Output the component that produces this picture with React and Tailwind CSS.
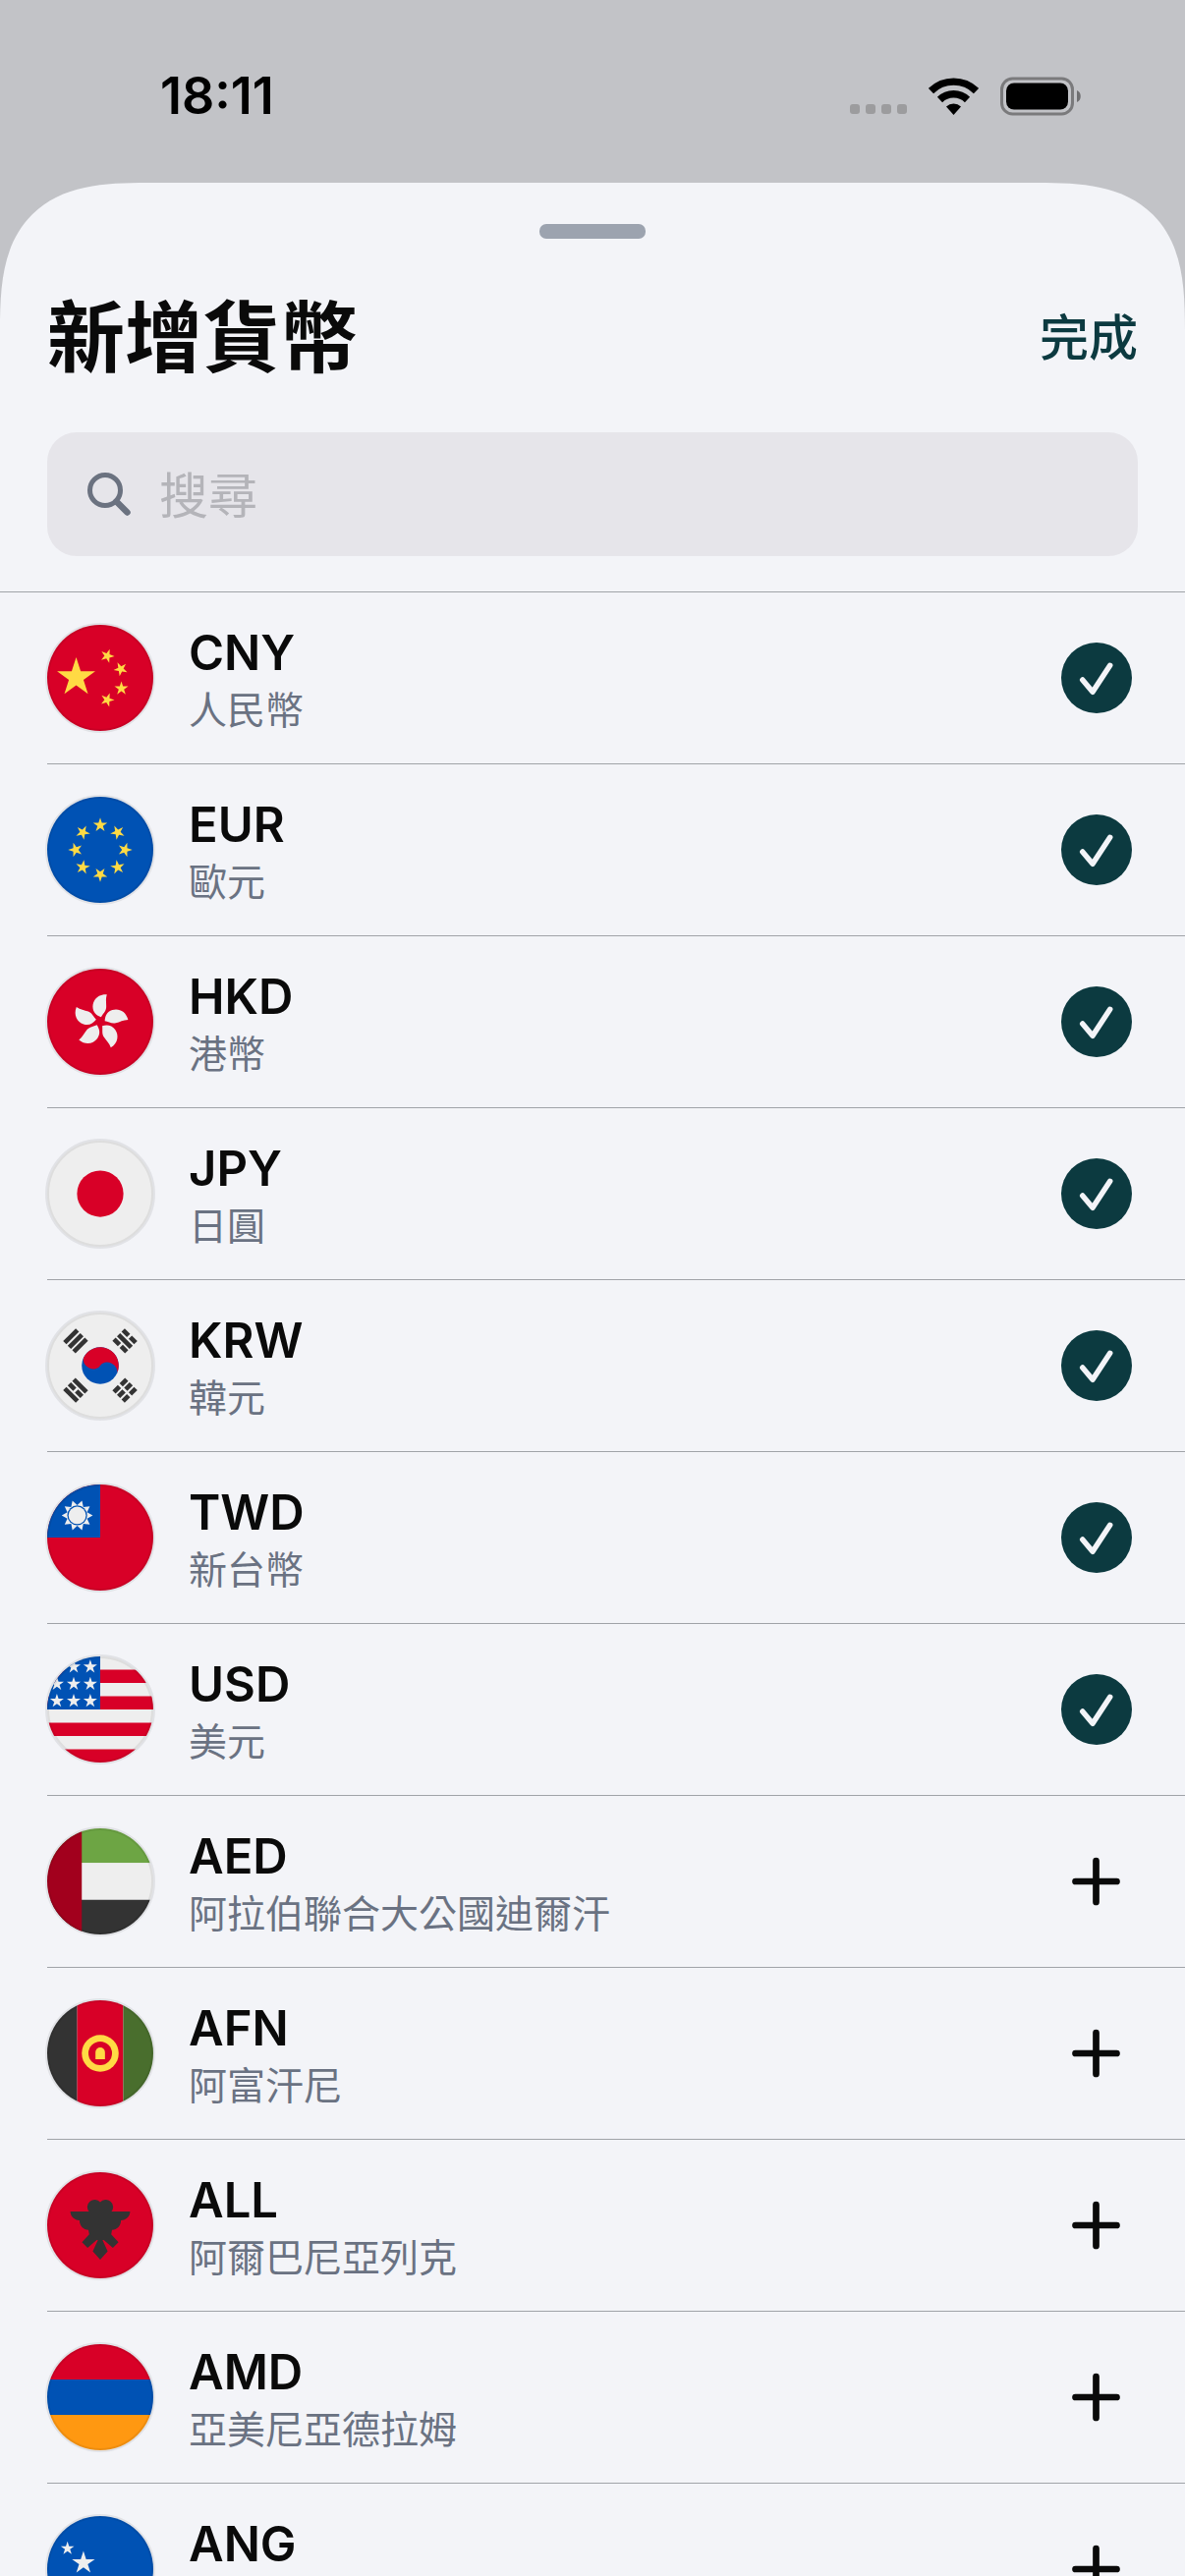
import { useState } from "react";

/* FLAG HELPERS */
function starPoints(cx, cy, r) {
  return Array.from({ length: 10 }, (_, i) => {
    const radius = i % 2 ? r * 0.382 : r;
    const angle = (i * Math.PI) / 5 - Math.PI / 2;
    return `${cx + radius * Math.cos(angle)},${cy + radius * Math.sin(angle)}`;
  }).join(" ");
}

function Star({ cx, cy, r, turn = 0, fill = "#eee" }) {
  return (
    <polygon
      points={starPoints(cx, cy, r)}
      transform={`rotate(${turn} ${cx} ${cy})`}
      fill={fill}
    />
  );
}

/* bars run from the outside in, true = unbroken */
function Trigram({ angle, bars }) {
  return (
    <g transform={`rotate(${angle} 256 256) translate(256 88)`} fill="#333">
      {bars.map((solid, i) => {
        const y = -42 + i * 31;
        return solid ? (
          <rect key={i} x="-43" y={y} width="86" height="22" />
        ) : (
          <g key={i}>
            <rect x="-43" y={y} width="37" height="22" />
            <rect x="6" y={y} width="37" height="22" />
          </g>
        );
      })}
    </g>
  );
}

const sunRays = Array.from({ length: 20 }, (_, i) => {
  const radius = i % 2 ? 50 : 75;
  const angle = (i * Math.PI) / 10;
  return `${145 + radius * Math.cos(angle)},${149 + radius * Math.sin(angle)}`;
}).join(" ");

/* FLAGS */
const flags = {
  CNY: (
    <>
      <path fill="#d80027" d="M0 0h512v512H0z" />
      <Star cx={140} cy={254} r={97} fill="#ffda44" />
      <Star cx={290} cy={150} r={35} turn={20} fill="#ffda44" />
      <Star cx={355} cy={213} r={35} turn={45} fill="#ffda44" />
      <Star cx={358} cy={307} r={35} fill="#ffda44" />
      <Star cx={290} cy={362} r={35} turn={20} fill="#ffda44" />
    </>
  ),
  EUR: (
    <>
      <path fill="#0052b4" d="M0 0h512v512H0z" />
      {[0, 45, 90, 135, 180, 225, 270, 315].map((a) => (
        <g key={a} transform={`rotate(${a} 256 256)`}>
          <Star cx={256} cy={137} r={36} fill="#ffda44" />
        </g>
      ))}
    </>
  ),
  HKD: (
    <>
      <path fill="#d80027" d="M0 0h512v512H0z" />
      {[0, 72, 144, 216, 288].map((a) => (
        <path
          key={a}
          transform={`translate(256 256) rotate(${a})`}
          fill="#eee"
          d="M32-131C-10-134-36-105-36-73C-36-45-18-30 4-22C12-38 28-50 29-70C30-90 25-108 32-131z"
        />
      ))}
    </>
  ),
  JPY: (
    <>
      <path fill="#eee" d="M0 0h512v512H0z" />
      <circle cx="256" cy="256" r="112" fill="#d80027" />
    </>
  ),
  KRW: (
    <>
      <path fill="#eee" d="M0 0h512v512H0z" />
      <circle cx="256" cy="256" r="89" fill="#0052b4" />
      <path
        transform="translate(256 256) rotate(27)"
        fill="#d80027"
        d="M-89 0A89 89 0 0 1 89 0A44 34 0 0 0 0 0A44 34 0 0 1-89 0z"
      />
      <Trigram angle={-45} bars={[true, true, true]} />
      <Trigram angle={45} bars={[false, true, false]} />
      <Trigram angle={-135} bars={[true, false, true]} />
      <Trigram angle={135} bars={[false, false, false]} />
    </>
  ),
  TWD: (
    <>
      <path fill="#d80027" d="M0 0h512v512H0z" />
      <path fill="#0052b4" d="M0 0h256v256H0z" />
      <polygon points={sunRays} fill="#eee" />
      <circle cx="145" cy="149" r="48" fill="#0052b4" />
      <circle cx="145" cy="149" r="42" fill="#eee" />
    </>
  ),
  USD: (
    <>
      <path fill="#eee" d="M0 0h512v512H0z" />
      <path
        fill="#d80027"
        d="M0 64h512v64H0zM0 192h512v64H0zM0 320h512v64H0zM0 448h512v64H0z"
      />
      <path fill="#0052b4" d="M0 0h256v256H0z" />
      {[50, 133, 215].map((y) =>
        [47, 128, 208].map((x) => <Star key={`${x}-${y}`} cx={x} cy={y} r={35} />)
      )}
    </>
  ),
  AED: (
    <>
      <path fill="#6da544" d="M0 0h512v167H0z" />
      <path fill="#eee" d="M0 167h512v178H0z" />
      <path fill="#333" d="M0 345h512v167H0z" />
      <path fill="#a2001d" d="M0 0h167v512H0z" />
    </>
  ),
  AFN: (
    <>
      <path fill="#333" d="M0 0h145v512H0z" />
      <path fill="#d80027" d="M145 0h222v512H145z" />
      <path fill="#496e2d" d="M367 0h145v512H367z" />
      <circle cx="256" cy="256" r="89" fill="#ffda44" />
      <circle cx="256" cy="256" r="57" fill="#d80027" />
      <path fill="#ffda44" d="M233 285v-34a23 23 0 0 1 46 0v34z" />
    </>
  ),
  ALL: (
    <>
      <path fill="#d80027" d="M0 0h512v512H0z" />
      <path
        fill="#333"
        d="M112 190h90a33 33 0 1 1 54-45a33 33 0 1 1 54 45h90c0 23-19 42-44 42c0 26-19 46-43 46l-4 22l35 38l-27 27l-44-38h-6l25 55l-36 40l-36-40l25-55h-6l-44 38l-27-27l35-38l-4-22c-24 0-43-20-43-46c-25 0-44-19-44-42z"
      />
    </>
  ),
  AMD: (
    <>
      <path fill="#d80027" d="M0 0h512v171H0z" />
      <path fill="#0052b4" d="M0 171h512v170H0z" />
      <path fill="#ff9811" d="M0 341h512v171H0z" />
    </>
  ),
  ANG: (
    <>
      <path fill="#0052b4" d="M0 0h512v512H0z" />
      <path fill="#ffda44" d="M0 322h512v67H0z" />
      <Star cx={98} cy={156} r={34} />
      <Star cx={175} cy={226} r={58} />
    </>
  ),
};

const currencies = [
  { code: "CNY", name: "人民幣" },
  { code: "EUR", name: "歐元" },
  { code: "HKD", name: "港幣" },
  { code: "JPY", name: "日圓" },
  { code: "KRW", name: "韓元" },
  { code: "TWD", name: "新台幣" },
  { code: "USD", name: "美元" },
  { code: "AED", name: "阿拉伯聯合大公國迪爾汗" },
  { code: "AFN", name: "阿富汗尼" },
  { code: "ALL", name: "阿爾巴尼亞列克" },
  { code: "AMD", name: "亞美尼亞德拉姆" },
  { code: "ANG", name: "荷屬安地列斯盾" },
];

/* STATUS BAR */
function StatusBar() {
  return (
    <div className="flex h-[186px] shrink-0 items-center justify-between pt-2.5 pr-[106px] pl-[163px]">
      <time className="text-[52px] leading-[60px] font-semibold text-black">
        18:11
      </time>

      <div className="flex items-center">
        <div className="mt-[26px] mr-[22px] flex gap-1.5">
          {[0, 1, 2, 3].map((i) => (
            <span key={i} className="size-2.5 rounded-[3px] bg-[#9c9c9e]" />
          ))}
        </div>
        <svg viewBox="0 0 51 38" className="mr-[22px] h-[38px] w-[51px]" aria-hidden="true">
          <g fill="none" stroke="#000" strokeWidth="7.4">
            <path d="M2.5 13.5a33 33 0 0 1 46 0" />
            <path d="M11.5 22.5a20 20 0 0 1 28 0" />
          </g>
          <path d="M18 29.5a11 11 0 0 1 15 0L25.5 38z" />
        </svg>
        <svg viewBox="0 0 82 40" className="h-10 w-[82px]" aria-hidden="true">
          <rect x="1.5" y="2" width="72" height="36" rx="11" fill="none" stroke="#7a7a7c" strokeWidth="3" />
          <rect x="6" y="6.5" width="63" height="27" rx="8" />
          <path fill="#6f6f71" d="M78 14c5 1.500 5 10.500 0 12z" />
        </svg>
      </div>
    </div>
  );
}

function CheckIcon() {
  return (
    <svg viewBox="0 0 72 72" className="size-[72px]" aria-hidden="true">
      <circle cx="36" cy="36" r="36" fill="#0c3a40" />
      <path
        d="M21.700 38 32 50.300 49.700 23.300"
        fill="none"
        stroke="#f3f4f8"
        strokeWidth="5.500"
        strokeLinecap="round"
        strokeLinejoin="round"
      />
    </svg>
  );
}

function PlusIcon() {
  return (
    <svg viewBox="0 0 72 72" className="size-[72px]" aria-hidden="true">
      <path
        d="M35.500 15v42M14.500 36h42"
        fill="none"
        stroke="#0a0a0a"
        strokeWidth="6.700"
        strokeLinecap="round"
      />
    </svg>
  );
}

/* LIST ROW */
function CurrencyRow({ currency, selected, onToggle }) {
  return (
    <li className="ml-12 flex h-[175px] items-center gap-9 border-b border-[#a0a3a8] pr-[54px]">
      <svg
        viewBox="0 0 512 512"
        className="size-[108px] shrink-0 rounded-full outline-4 -outline-offset-2 outline-black/7"
        aria-hidden="true"
      >
        {flags[currency.code]}
      </svg>

      <div className="min-w-0 flex-1 pt-1">
        <p className="text-[49px] leading-[60px] font-semibold text-[#0a0a0a]">
          {currency.code}
        </p>
        <p className="mt-0.5 text-[39px] leading-[52px] text-gray-500">
          {currency.name}
        </p>
      </div>

      <button
        type="button"
        aria-pressed={selected}
        aria-label={currency.name}
        onClick={onToggle}
        className="shrink-0"
      >
        {selected ? <CheckIcon /> : <PlusIcon />}
      </button>
    </li>
  );
}

export default function App() {
  const [query, setQuery] = useState("");
  const [selected, setSelected] = useState([
    "CNY", "EUR", "HKD", "JPY", "KRW", "TWD", "USD",
  ]);

  const toggle = (code) =>
    setSelected((prev) =>
      prev.includes(code) ? prev.filter((c) => c !== code) : [...prev, code]
    );

  const visible = currencies.filter(
    (c) => c.code.includes(query.toUpperCase()) || c.name.includes(query)
  );

  return (
    <div
      lang="zh-Hant"
      className="flex h-screen flex-col overflow-hidden bg-[#c2c3c7] font-[Inter,'Noto_Sans_CJK_TC',sans-serif]"
    >
      <StatusBar />

      <main className="flex min-h-0 flex-1 flex-col overflow-hidden rounded-t-[114px] bg-[#f3f4f8] supports-[corner-shape:squircle]:rounded-t-[150px] supports-[corner-shape:squircle]:[corner-shape:superellipse(1.5)]">
        {/* HEADER */}
        <header className="shrink-0 border-b border-[#a0a3a8] px-12 pt-[42px] pb-9">
          <div className="mx-auto h-[15px] w-[108px] rounded-[7px] bg-[#9ca3af]" />

          <div className="mt-[53px] flex items-center justify-between">
            <h1 className="text-[79px] leading-[96px] font-bold text-[#0a0a0a]">
              新增貨幣
            </h1>
            <button
              type="button"
              className="text-[50px] leading-[60px] font-medium text-[#0c3a40]"
            >
              完成
            </button>
          </div>

          <label className="mt-12 flex h-[126px] items-center gap-7 rounded-[30px] bg-[#e6e5ea] px-10">
            <svg viewBox="0 0 46 46" className="size-[46px] shrink-0" aria-hidden="true">
              <g fill="none" stroke="#6b7280" strokeLinecap="round">
                <circle cx="19" cy="19" r="15.500" strokeWidth="5" />
                <path d="M30.500 30.500 41.500 41.500" strokeWidth="6.500" />
              </g>
            </svg>
            <input
              type="text"
              value={query}
              onChange={(e) => setQuery(e.target.value)}
              placeholder="搜尋"
              aria-label="搜尋"
              className="min-w-0 flex-1 bg-transparent pt-1 text-[50px] leading-[60px] text-[#0a0a0a] outline-none placeholder:text-[#b4b4b9]"
            />
          </label>
        </header>

        {/* CURRENCIES */}
        <ul className="min-h-0 flex-1 overflow-y-auto [scrollbar-width:none]">
          {visible.map((currency) => (
            <CurrencyRow
              key={currency.code}
              currency={currency}
              selected={selected.includes(currency.code)}
              onToggle={() => toggle(currency.code)}
            />
          ))}
        </ul>
      </main>
    </div>
  );
}
